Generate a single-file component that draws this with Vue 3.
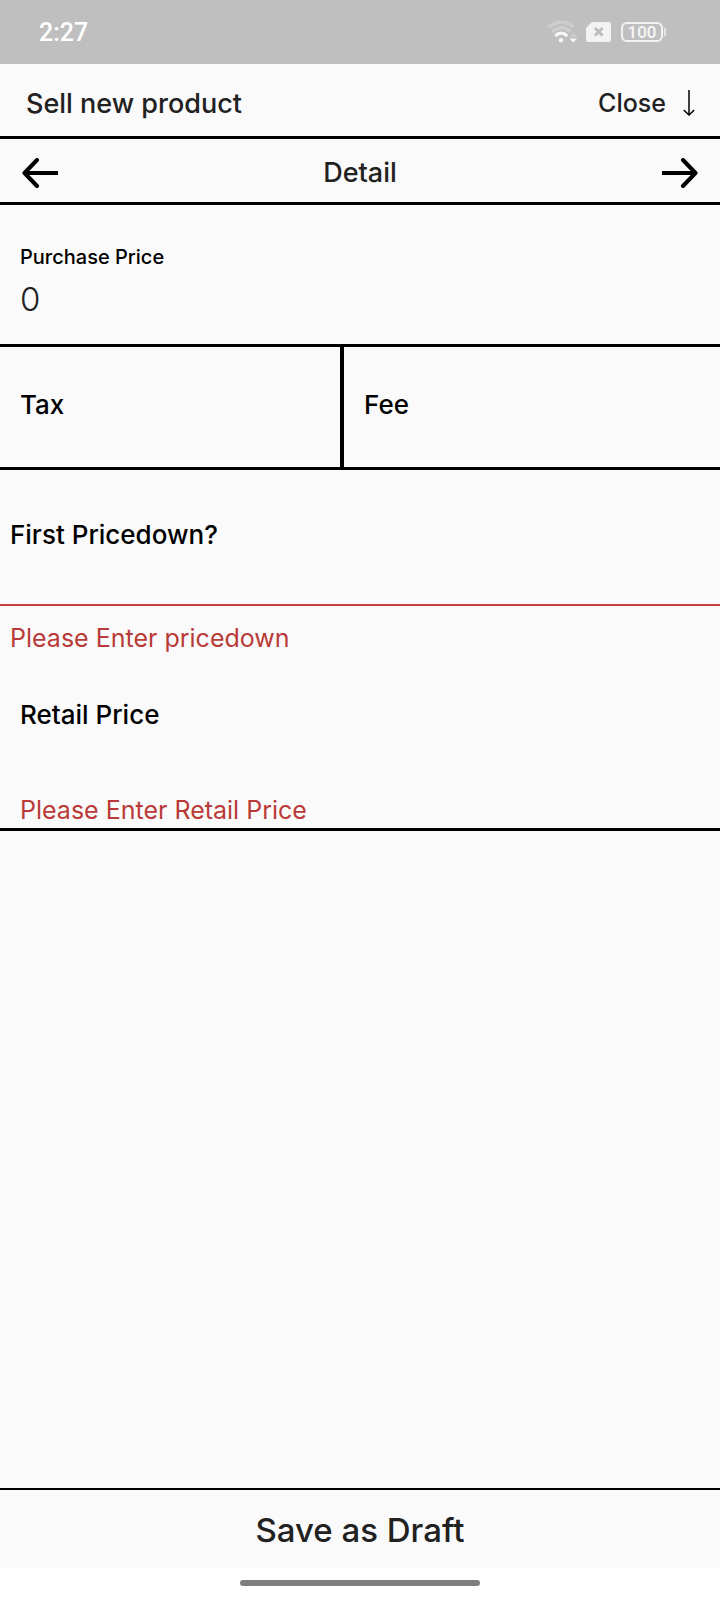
<script setup>
import { ref } from 'vue'

const purchasePrice = ref('0')
const tax = ref('')
const fee = ref('')
const pricedown = ref('')
const retailPrice = ref('')
</script>

<template>
  <div class="screen">
    <div class="status">
      <span class="time">2:27</span>
      <div class="status-icons">
        <svg class="wifi" width="30" height="24" viewBox="0 0 30 24" fill="none" aria-hidden="true">
          <path d="M1.500 7.200C9 .6 19 .6 27 7.200" stroke="#cdcdcd" stroke-width="3.4" />
          <path d="M5 11.8C11 6.6 17.5 6.6 23.5 11.8" stroke="#cdcdcd" stroke-width="3.4" />
          <path d="M8.2 16C12 12.4 16.5 12.4 20.3 16" stroke="#f7f7f7" stroke-width="3.2" />
          <circle cx="14" cy="20.3" r="2.2" fill="#f7f7f7" />
          <path d="M23 17l3.5-4 3.5 4z" fill="#cdcdcd" />
          <path d="M22.500 18.500h7.500l-3.700 4z" fill="#f7f7f7" />
        </svg>
        <svg width="26" height="20" viewBox="0 0 26 20" aria-hidden="true">
          <path d="M6 0h17a2 2 0 0 1 2 2v16a2 2 0 0 1-2 2H2a2 2 0 0 1-2-2V6z" fill="#f3f3f3" />
          <path d="M9 6l7.5 7.5M16.5 6L9 13.5" stroke="#bdbdbd" stroke-width="3" />
        </svg>
        <div class="battery"><span>100</span></div>
      </div>
    </div>

    <header class="title-bar">
      <h1>Sell new product</h1>
      <button type="button" class="close">
        Close
        <svg width="12" height="26" viewBox="0 0 12 26" fill="none" stroke="#000" aria-hidden="true">
          <path d="M6 0v25" stroke-width="1.5" />
          <path d="M.8 20l5.2 5 5.2-5" stroke-width="1.5" />
        </svg>
      </button>
    </header>

    <nav class="steps">
      <button type="button" aria-label="Previous">
        <svg width="36" height="30" viewBox="0 0 36 30" fill="none" stroke="#000" stroke-width="4" aria-hidden="true">
          <path d="M36 15H3" />
          <path d="M15 2L2.500 15 15 28" stroke-linecap="round" stroke-linejoin="round" />
        </svg>
      </button>
      <h2>Detail</h2>
      <button type="button" aria-label="Next">
        <svg width="36" height="30" viewBox="0 0 36 30" fill="none" stroke="#000" stroke-width="4" aria-hidden="true">
          <path d="M0 15h33" />
          <path d="M21 2l12.500 13L21 28" stroke-linecap="round" stroke-linejoin="round" />
        </svg>
      </button>
    </nav>

    <main>
      <section class="field purchase">
        <label for="purchase">Purchase Price</label>
        <input id="purchase" v-model="purchasePrice" inputmode="decimal" />
      </section>

      <div class="pair">
        <section class="field">
          <label for="tax">Tax</label>
          <input id="tax" v-model="tax" inputmode="decimal" />
        </section>
        <section class="field">
          <label for="fee">Fee</label>
          <input id="fee" v-model="fee" inputmode="decimal" />
        </section>
      </div>

      <section class="field pricedown">
        <label for="pricedown">First Pricedown?</label>
        <input id="pricedown" v-model="pricedown" aria-describedby="pricedown-error" />
        <p id="pricedown-error" class="error">Please Enter pricedown</p>
      </section>

      <section class="field retail">
        <label for="retail">Retail Price</label>
        <input id="retail" v-model="retailPrice" aria-describedby="retail-error" />
        <p id="retail-error" class="error">Please Enter Retail Price</p>
      </section>
    </main>

    <button type="button" class="draft">Save as Draft</button>
    <div class="gesture"><div class="pill"></div></div>
  </div>
</template>

<style>
body {
  margin: 0;
  background: #fafafa;
}
</style>

<style scoped>
* {
  box-sizing: border-box;
}
.screen {
  min-height: 100vh;
  display: flex;
  flex-direction: column;
  background: #fafafa;
  color: #212121;
  font-family: Inter, "Open Sans", sans-serif;
}
button,
input {
  font: inherit;
  color: inherit;
  background: none;
  border: 0;
  border-radius: 0;
  padding: 0;
  outline: none;
}
button {
  cursor: pointer;
}
h1,
h2,
p {
  margin: 0;
}
svg {
  display: block;
}
.status {
  height: 64px;
  padding: 0 54px 0 39px;
  display: flex;
  align-items: center;
  justify-content: space-between;
  background: #bfbfbf;
  color: #fff;
}
.time {
  font-family: Roboto, sans-serif;
  font-size: 25px;
  font-weight: 500;
}
.status-icons {
  display: flex;
  align-items: center;
  gap: 9px;
}
.battery {
  position: relative;
  width: 42px;
  height: 20px;
  margin-right: 3px;
  border: 2px solid #f3f3f3;
  border-radius: 6px;
  display: flex;
  align-items: center;
  justify-content: center;
  color: #f7f7f7;
  font-family: Roboto, sans-serif;
  font-size: 17px;
  font-weight: 500;
  line-height: 16px;
}
.battery::after {
  content: "";
  position: absolute;
  right: -5px;
  top: 4px;
  width: 2px;
  height: 8px;
  border-radius: 1px;
  background: #e6e6e6;
}
.title-bar {
  height: 75px;
  padding: 6px 25px 0 26px;
  display: flex;
  align-items: center;
  justify-content: space-between;
  border-bottom: 3px solid #000;
}
h1,
h2 {
  font-size: 27px;
  font-weight: 500;
}
.close {
  display: flex;
  align-items: center;
  gap: 17px;
  font-size: 25px;
  font-weight: 500;
}
.steps {
  height: 66px;
  padding: 4px 22px 0;
  display: flex;
  align-items: center;
  justify-content: space-between;
  border-bottom: 3px solid #000;
}
main {
  flex: 1;
}
.field {
  display: flex;
  flex-direction: column;
  padding: 0 20px;
}
.field label {
  color: #000;
  font-size: 26px;
  font-weight: 500;
  line-height: 36px;
}
.field input {
  width: 100%;
  height: 44px;
  font-size: 33px;
}
.purchase {
  padding-top: 38px;
  padding-bottom: 17px;
  border-bottom: 3px solid #000;
}
.purchase label {
  font-size: 20px;
  line-height: 28px;
}
.purchase input {
  height: 56px;
  font-weight: 300;
}
.pair {
  display: grid;
  grid-template-columns: 344fr 376fr;
  border-bottom: 3px solid #000;
}
.pair .field {
  padding-top: 40px;
}
.pair .field:first-child {
  border-right: 4px solid #000;
}
.pricedown {
  padding: 47px 0 0;
}
.pricedown label,
.pricedown .error {
  padding: 0 10px;
}
.pricedown input {
  height: 53px;
  padding: 0 10px;
  border-bottom: 2px solid #c6423f;
}
.error {
  color: #b93a38;
  font-size: 25px;
  line-height: 36px;
}
.pricedown .error {
  margin-top: 14px;
}
.retail {
  padding-top: 41px;
  border-bottom: 3px solid #000;
}
.retail input {
  height: 59px;
}
.draft {
  height: 80px;
  padding-top: 2px;
  border-top: 2px solid #000;
  font-size: 33px;
  font-weight: 500;
}
.gesture {
  height: 32px;
  padding-bottom: 2px;
  display: flex;
  align-items: center;
  justify-content: center;
  background: #fff;
}
.pill {
  width: calc(100% / 3);
  height: 6px;
  border-radius: 3px;
  background: #808080;
}
</style>
